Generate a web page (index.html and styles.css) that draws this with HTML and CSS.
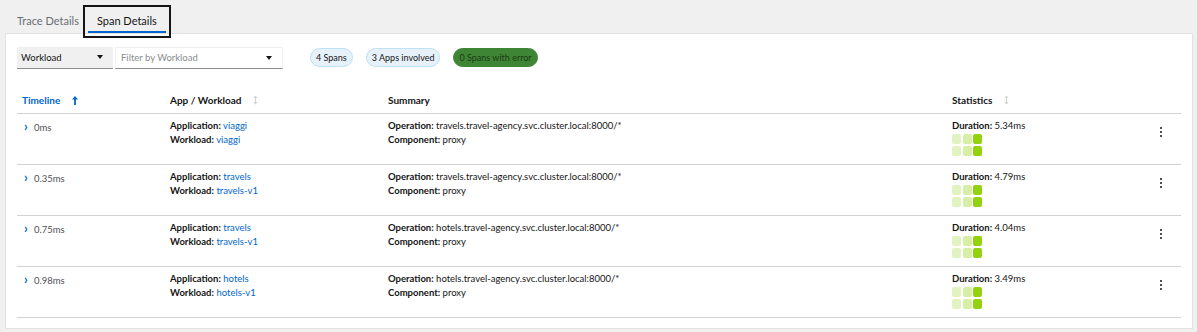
FILE: index.html
```html
<!DOCTYPE html>
<html lang="en">
<head>
<meta charset="UTF-8">
<title>Span Details</title>
<link rel="stylesheet" href="styles.css">
</head>
<body>
<div class="tabs">
    <button class="tab">Trace Details</button>
    <button class="tab tab-active">Span Details</button>
</div>

<div class="card">
    <div class="toolbar">
        <div class="select">Workload <span class="caret"></span></div>
        <div class="filter">Filter by Workload <span class="caret"></span></div>
        <span class="chip">4 Spans</span>
        <span class="chip">3 Apps involved</span>
        <span class="chip chip-ok">0 Spans with error</span>
    </div>

    <table class="spans">
        <thead>
            <tr>
                <th class="col-time sorted">Timeline
                    <svg class="sort" viewBox="0 0 8 12" width="6" height="9"><path d="M4 0 L8 4.5 H5.2 V12 H2.8 V4.5 H0 Z" fill="#06c"/></svg>
                </th>
                <th class="col-app">App / Workload
                    <svg class="sort" viewBox="0 0 8 14" width="5" height="10"><path d="M4 0 L7.5 3.5 H5 V10.5 H7.5 L4 14 L0.5 10.5 H3 V3.5 H0.5 Z" fill="#d2d2d2"/></svg>
                </th>
                <th class="col-sum">Summary</th>
                <th class="col-stat">Statistics
                    <svg class="sort" viewBox="0 0 8 14" width="5" height="10"><path d="M4 0 L7.5 3.5 H5 V10.5 H7.5 L4 14 L0.5 10.5 H3 V3.5 H0.5 Z" fill="#d2d2d2"/></svg>
                </th>
                <th class="col-act"></th>
            </tr>
        </thead>
        <tbody>
            <tr>
                <td><span class="toggle">&#x203A;</span><span class="time">0ms</span></td>
                <td><b>Application:</b> <a href="#">viaggi</a><br><b>Workload:</b> <a href="#">viaggi</a></td>
                <td><b>Operation:</b> travels.travel-agency.svc.cluster.local:8000/*<br><b>Component:</b> proxy</td>
                <td><b>Duration:</b> 5.34ms
                    <div class="heat"><i class="h1"></i><i class="h2"></i><i class="h3"></i><i class="h1"></i><i class="h2"></i><i class="h3"></i></div>
                </td>
                <td class="act"><span class="kebab"><i></i><i></i><i></i></span></td>
            </tr>
            <tr>
                <td><span class="toggle">&#x203A;</span><span class="time">0.35ms</span></td>
                <td><b>Application:</b> <a href="#">travels</a><br><b>Workload:</b> <a href="#">travels-v1</a></td>
                <td><b>Operation:</b> travels.travel-agency.svc.cluster.local:8000/*<br><b>Component:</b> proxy</td>
                <td><b>Duration:</b> 4.79ms
                    <div class="heat"><i class="h1"></i><i class="h2"></i><i class="h3"></i><i class="h1"></i><i class="h2"></i><i class="h3"></i></div>
                </td>
                <td class="act"><span class="kebab"><i></i><i></i><i></i></span></td>
            </tr>
            <tr>
                <td><span class="toggle">&#x203A;</span><span class="time">0.75ms</span></td>
                <td><b>Application:</b> <a href="#">travels</a><br><b>Workload:</b> <a href="#">travels-v1</a></td>
                <td><b>Operation:</b> hotels.travel-agency.svc.cluster.local:8000/*<br><b>Component:</b> proxy</td>
                <td><b>Duration:</b> 4.04ms
                    <div class="heat"><i class="h1"></i><i class="h2"></i><i class="h3"></i><i class="h1"></i><i class="h2"></i><i class="h3"></i></div>
                </td>
                <td class="act"><span class="kebab"><i></i><i></i><i></i></span></td>
            </tr>
            <tr>
                <td><span class="toggle">&#x203A;</span><span class="time">0.98ms</span></td>
                <td><b>Application:</b> <a href="#">hotels</a><br><b>Workload:</b> <a href="#">hotels-v1</a></td>
                <td><b>Operation:</b> hotels.travel-agency.svc.cluster.local:8000/*<br><b>Component:</b> proxy</td>
                <td><b>Duration:</b> 3.49ms
                    <div class="heat"><i class="h1"></i><i class="h2"></i><i class="h3"></i><i class="h1"></i><i class="h2"></i><i class="h3"></i></div>
                </td>
                <td class="act"><span class="kebab"><i></i><i></i><i></i></span></td>
            </tr>
        </tbody>
    </table>
</div>
</body>
</html>
```

FILE: styles.css
```css
body {
  margin: 0;
  padding: 0 5px 5px 6px;
  background: #f0f0f0;
  font-family: 'Lato', sans-serif;
  color: #151515;
}
.tabs {
  display: flex;
  height: 34px;
  padding-left: 2px;
}
.tab {
  font-family: 'Lato', sans-serif;
  font-size: 11px;
  color: #6a6e73;
  background: none;
  border: none;
  padding: 0 9px;
  height: 23px;
  margin-top: 10px;
  border-bottom: 2px solid transparent;
}
.tab-active {
  color: #151515;
  border-bottom-color: #06c;
  outline: 2px solid #151515;
  outline-offset: 3px;
}
.card {
  background: #fff;
  box-shadow: 0 0 0 1px #e2e2e2;
  padding: 12px 11px 10px;
}
.toolbar {
  display: flex;
  align-items: center;
  height: 23px;
  font-size: 9.5px;
}
.select {
  width: 96px;
  height: 22px;
  box-sizing: border-box;
  background: #f0f0f0;
  border-bottom: 1px solid #8a8d90;
  padding: 0 4px;
  display: flex;
  align-items: center;
  justify-content: space-between;
  padding-right: 10px;
}
.filter {
  width: 168px;
  height: 22px;
  box-sizing: border-box;
  margin-left: 2px;
  border: 1px solid #f0f0f0;
  border-bottom-color: #8a8d90;
  color: #8a8d90;
  padding: 0 10px 0 5px;
  display: flex;
  align-items: center;
  justify-content: space-between;
  margin-right: 27px;
}
.caret {
  width: 0;
  height: 0;
  border-left: 3.5px solid transparent;
  border-right: 3.5px solid transparent;
  border-top: 4px solid #151515;
}
.chip {
  font-size: 9px;
  height: 19px;
  line-height: 17px;
  box-sizing: border-box;
  padding: 0 5px;
  border-radius: 10px;
  background: #e7f1fa;
  border: 1px solid #bee1f4;
  color: #151515;
  margin-right: 13px;
}
.chip-ok {
  background: #3e8635;
  border-color: #3e8635;
  color: #1e3a17;
}
.spans {
  width: 100%;
  margin-top: 18px;
  border-collapse: collapse;
  font-size: 9.5px;
  table-layout: fixed;
}
.spans th {
  text-align: left;
  font-weight: 700;
  font-size: 10px;
  height: 26px;
  padding: 0 5px;
  border-bottom: 1px solid #d2d2d2;
}
.spans th.sorted {
  color: #06c;
}
.sort {
  margin-left: 9px;
  vertical-align: -1px;
}
.col-time { width: 138px; }
.col-app { width: 208px; }
.col-sum { width: 554px; }
.col-act { width: 30px; }
.spans td {
  vertical-align: top;
  padding: 5px 5px 0;
  height: 45px;
  line-height: 14px;
  border-bottom: 1px solid #d2d2d2;
}
.spans td b {
  font-weight: 700;
}
.spans a {
  color: #06c;
  text-decoration: none;
}
.toggle {
  display: inline-block;
  width: 10px;
  color: #06c;
  font-weight: 700;
  font-size: 13px;
  padding-left: 2px;
}
.time {
  color: #4f5255;
}
.heat {
  display: grid;
  grid-template-columns: repeat(3, 9px);
  grid-auto-rows: 10px;
  gap: 2px 1.5px;
  margin-top: 1px;
}
.heat i {
  border-radius: 2px;
}
.h1 { background: #e2f3c2; }
.h2 { background: #d6eea6; }
.h3 { background: #92d20f; }
.act {
  text-align: center;
}
.kebab {
  display: inline-flex;
  flex-direction: column;
  gap: 1.5px;
  margin-top: 4px;
}
.kebab i {
  width: 2.5px;
  height: 2.5px;
  border-radius: 50%;
  background: #151515;
}
```
